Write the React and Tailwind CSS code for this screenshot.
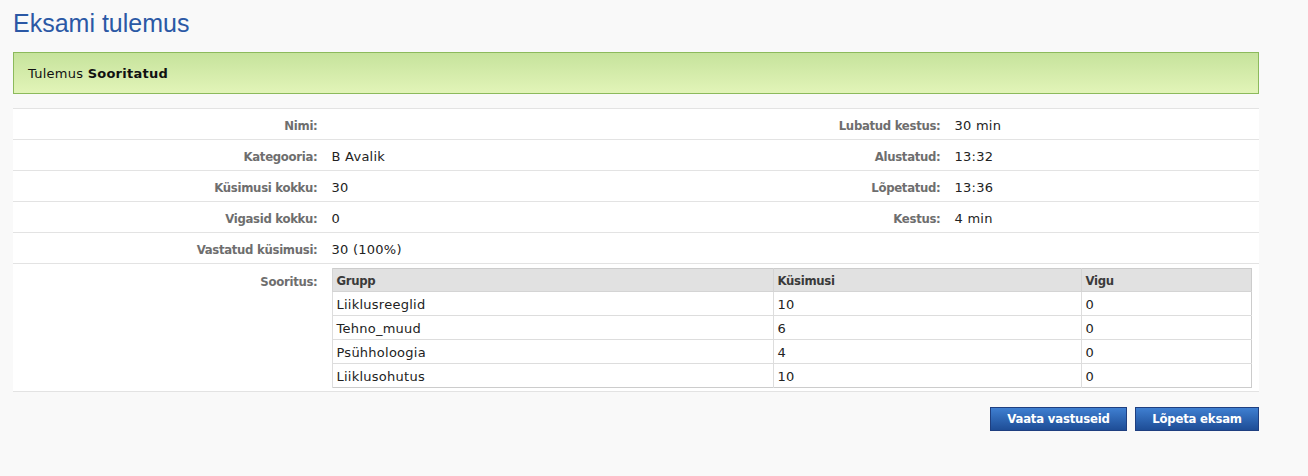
export default function App() {
  const rows = [
    ["Nimi:", "", "Lubatud kestus:", "30 min"],
    ["Kategooria:", "B Avalik", "Alustatud:", "13:32"],
    ["Küsimusi kokku:", "30", "Lõpetatud:", "13:36"],
    ["Vigasid kokku:", "0", "Kestus:", "4 min"],
    ["Vastatud küsimusi:", "30 (100%)", "", ""],
  ];
  const groups = [
    ["Liiklusreeglid", "10", "0"],
    ["Tehno_muud", "6", "0"],
    ["Psühholoogia", "4", "0"],
    ["Liiklusohutus", "10", "0"],
  ];
  const label = "text-right pr-[7px] pt-[3px] font-bold text-[#6e6e6e] text-[13px] [font-family:'DejaVu_Sans_Condensed','DejaVu_Sans',sans-serif] tracking-[-0.3px]";
  const val = "pl-[7px] pt-[3px] text-[13px] text-[#222] tracking-[0.25px]";
  return (
    <div className="min-h-[476px] w-full bg-[#f9f9f9] px-[13px] pt-[6px] [font-family:'DejaVu_Sans',Verdana,sans-serif]">
      <h1 className="text-[25px] leading-[34px] text-[#2b58a5] [font-family:'Liberation_Sans',Arial,sans-serif]">Eksami tulemus</h1>
      <div className="mt-[12px] h-[42px] w-[1246px] border border-[#8cba5c] bg-gradient-to-b from-[#c6e39c] to-[#e2f4b8] pl-[14px] pt-[2px] flex items-center text-[13px] text-[#111] tracking-[0.25px]">
        <span>Tulemus&nbsp;<b className="font-bold">Sooritatud</b></span>
      </div>
      <table className="mt-[14px] w-[1246px] table-fixed border-collapse bg-white">
        <tbody>
          {rows.map((r, i) => (
            <tr key={i} className="h-[31px] border-t border-[#e3e3e3]">
              <td className={label}>{r[0]}</td>
              <td className={val}>{r[1]}</td>
              <td className={label}>{r[2]}</td>
              <td className={val}>{r[3]}</td>
            </tr>
          ))}
          <tr className="border-t border-b border-[#e3e3e3]">
            <td className={label + " align-top !pt-[8px]"}>Sooritus:</td>
            <td colSpan={3} className="pl-[7px] pr-[7px] pt-[4px] pb-[3px] align-top">
              <table className="w-[919px] table-fixed border-collapse border border-[#cccccc] text-[13px] text-[#222]">
                <colgroup>
                  <col className="w-[441px]" />
                  <col className="w-[308px]" />
                  <col className="w-[170px]" />
                </colgroup>
                <thead>
                  <tr className="h-[23px] bg-[#e1e1e1] border-b border-[#d4d4d4]">
                    {["Grupp", "Küsimusi", "Vigu"].map((h) => (
                      <th key={h} className="text-left pl-[4px] pt-[2px] font-bold text-[#3a3a3a] border-l border-[#d4d4d4] [font-family:'DejaVu_Sans_Condensed','DejaVu_Sans',sans-serif] tracking-[-0.3px]">{h}</th>
                    ))}
                  </tr>
                </thead>
                <tbody>
                  {groups.map((g, i) => (
                    <tr key={i} className="h-[24px] border-t border-[#dddddd] bg-white">
                      {g.map((c, j) => (
                        <td key={j} className="pl-[4px] pt-[2px] border-l border-[#dddddd] tracking-[0.25px]">{c}</td>
                      ))}
                    </tr>
                  ))}
                </tbody>
              </table>
            </td>
          </tr>
        </tbody>
      </table>
      <div className="mt-[15px] w-[1246px] flex justify-end gap-[8px]">
        <button className="h-[24px] w-[137px] border border-[#1f3f80] bg-gradient-to-b from-[#3f7fd1] to-[#1e4d96] text-white text-[13px] font-bold [font-family:'DejaVu_Sans_Condensed','DejaVu_Sans',sans-serif] tracking-[-0.2px]">Vaata vastuseid</button>
        <button className="h-[24px] w-[124px] border border-[#1f3f80] bg-gradient-to-b from-[#3f7fd1] to-[#1e4d96] text-white text-[13px] font-bold [font-family:'DejaVu_Sans_Condensed','DejaVu_Sans',sans-serif] tracking-[-0.2px]">Lõpeta eksam</button>
      </div>
    </div>
  );
}
